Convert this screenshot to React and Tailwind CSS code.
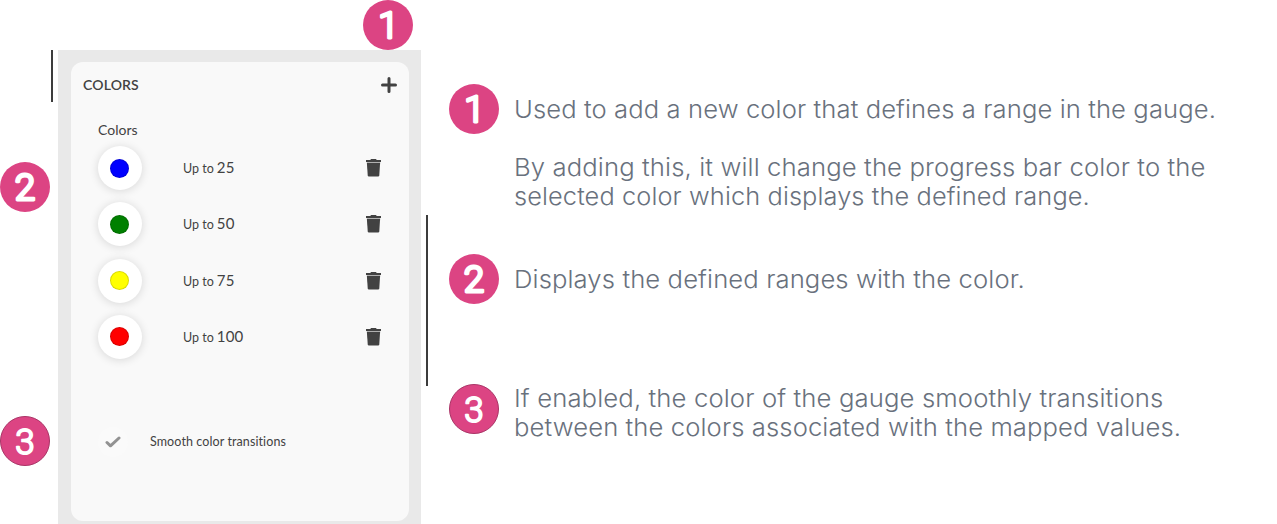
function Badge({ n }) {
  return (
    <svg viewBox="0 0 50 50" className="block size-[50px] shrink-0">
      <circle cx="25" cy="25" r={n === 3 ? 24.5 : 25} fill="#dc4483" stroke={n === 3 ? "#a93466" : "none"} />
      <text
        x={n === 1 ? 25.5 : 25}
        y={n === 3 ? 37.6 : 38}
        textAnchor="middle"
        fill="white"
        stroke="white"
        strokeWidth={n === 3 ? 1.9 : 3}
        strokeLinejoin="round"
        className={n === 3 ? "font-['Roboto',sans-serif] text-[35px] font-light" : "font-['Roboto',sans-serif] text-[37px] font-light"}
      >
        {n}
      </text>
    </svg>
  );
}

function Trash() {
  return (
    <svg viewBox="0 0 16 18" className="h-[18px] w-4 -translate-x-[0.5px]" fill="#424242">
      <path d="M5.5 0h5l.7 1H15.500v2H.5V1h4.300z" />
      <path d="M1.300 3h13.400v1H1.300z" fill="#b0b0b0" />
      <path d="M1.400 4h13.200l-.8 12.500q-.1 1.100-1.200 1.100H3.400q-1.100 0-1.200-1.100z" />
    </svg>
  );
}

const ranges = [
  { value: 25, color: "bg-[#0000ff]" },
  { value: 50, color: "bg-[#008000]" },
  { value: 75, color: "bg-[#ffff00]" },
  { value: 100, color: "bg-[#ff0000]" },
];

function ColorsCard() {
  return (
    <section className="h-[459px] w-[338px] rounded-[12px] bg-[#f9f9f9] text-[#424242]">
      <header className="flex h-[45px] items-center justify-between pl-3 pr-3">
        <h2 className="whitespace-nowrap text-[14px] font-semibold leading-5 tracking-[0.15px]">COLORS</h2>
        <svg viewBox="0 0 16 16" className="size-4" fill="none" stroke="#424242" strokeWidth="3" strokeLinecap="round">
          <path d="M8 1.500v13M1.500 8h13" />
        </svg>
      </header>
      <h3 className="mt-[13px] pl-[27px] text-[14px] leading-5">Colors</h3>
      <div className="mt-[6px] flex flex-col gap-[12.300px]">
        {ranges.map((r) => (
          <div key={r.value} className="flex h-11 items-center pl-[26.500px] pr-[27px]">
            <span className="flex size-11 items-center justify-center rounded-full bg-white shadow-[0_1px_10px_rgba(0,0,0,0.14)]">
              <span className={`size-[19px] rounded-full border border-black/15 ${r.color}`} />
            </span>
            <span className="ml-[41.500px] flex flex-1 items-baseline gap-[3px] whitespace-nowrap leading-5">
              <span className="text-[12.500px]">Up to</span>
              <span className="text-[15px] tracking-[0.2px]">{r.value}</span>
            </span>
            <Trash />
          </div>
        ))}
      </div>
      <div className="mt-[67px] flex h-[32px] items-center pl-[27px]">
        <span className="flex size-[30px] items-center justify-center rounded-full bg-[#fafafa]">
          <svg viewBox="0 0 16 12" className="h-3 w-4" fill="none" stroke="#929292" strokeWidth="3" strokeLinecap="round" strokeLinejoin="round">
            <path d="M2 6.500 5.500 9.800 14 2" />
          </svg>
        </span>
        <span className="ml-[22px] whitespace-nowrap text-[12.500px] tracking-[0.1px]">Smooth color transitions</span>
      </div>
    </section>
  );
}

function Line({ children, stretch }) {
  return <p className={`h-[29px] w-fit origin-left whitespace-nowrap leading-[29px] ${stretch}`}>{children}</p>;
}

export default function App() {
  return (
    <main className="flex h-[524px] w-[1277px] overflow-hidden bg-white font-['Lato','Liberation_Sans',sans-serif]">
      <aside className="flex w-[58px] shrink-0 flex-col pt-[50px]">
        <div className="ml-[51px] h-[52px] w-[2px] bg-[#3c3c3c]" />
        <div className="mt-[60px]"><Badge n={2} /></div>
        <div className="mt-[204px]"><Badge n={3} /></div>
      </aside>
      <div className="w-[363px] shrink-0">
        <div className="flex h-[50px] justify-end pr-2"><Badge n={1} /></div>
        <div className="h-[474px] bg-[#e9e9e9] pl-[13px] pt-3">
          <ColorsCard />
        </div>
      </div>
      <div className="ml-[5px] mt-[215px] h-[171px] w-[2px] shrink-0 bg-[#3c3c3c]" />
      <div className="ml-[21px] w-[800px] pt-[84px] font-['Inter',sans-serif] text-[24px] font-light text-[#69717d]">
        <div className="flex h-[170px] gap-[15px]">
          <Badge n={1} />
          <div className="pt-[11px]">
            <Line stretch="scale-x-[1.066] tracking-[0.1px]">Used to add a new color that defines a range in the gauge.</Line>
            <div className="mt-[29px]">
              <Line stretch="scale-x-[1.070] tracking-[0.1px]">By adding this, it will change the progress bar color to the</Line>
              <Line stretch="scale-x-[1.057] tracking-[0.1px]">selected color which displays the defined range.</Line>
            </div>
          </div>
        </div>
        <div className="flex h-[130px] gap-[15px]">
          <Badge n={2} />
          <div className="pt-[11px]">
            <Line stretch="scale-x-[1.068] tracking-[0.1px]">Displays the defined ranges with the color.</Line>
          </div>
        </div>
        <div className="flex gap-[15px]">
          <Badge n={3} />
          <div>
            <Line stretch="scale-x-[1.071] tracking-[0.1px]">If enabled, the color of the gauge smoothly transitions</Line>
            <Line stretch="scale-x-[1.067] tracking-[0.1px]">between the colors associated with the mapped values.</Line>
          </div>
        </div>
      </div>
    </main>
  );
}
